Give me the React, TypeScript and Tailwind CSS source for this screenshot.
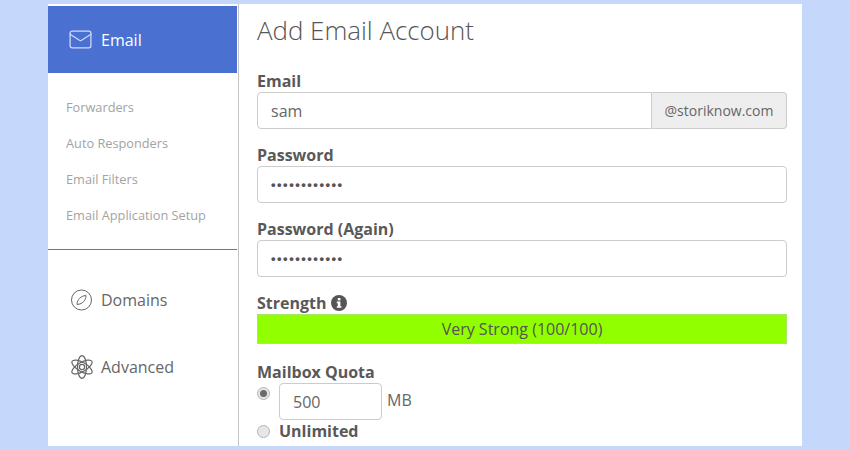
import { Mail } from 'lucide-react'

const subLinks = ['Forwarders', 'Auto Responders', 'Email Filters', 'Email Application Setup']

function Radio({ checked }: { checked?: boolean }) {
  return (
    <span className="flex h-[13px] w-[13px] shrink-0 items-center justify-center rounded-full border border-[#b5b5b5] bg-[#e6e6e6]">
      {checked && <span className="h-[7px] w-[7px] rounded-full bg-[#6b6b6b]" />}
    </span>
  )
}

function CompassIcon() {
  return (
    <svg width="22" height="22" viewBox="0 0 22 22" fill="none" stroke="currentColor" strokeWidth="1" className="shrink-0">
      <circle cx="10.5" cy="11" r="10" />
      <path d="M15 6.5C15 11 12 15 6 15.5C6.3 10.5 9.5 7 15 6.5Z" />
    </svg>
  )
}

function AtomIcon() {
  return (
    <svg width="22" height="24" viewBox="0 0 22 24" fill="none" stroke="currentColor" strokeWidth="1.2" className="shrink-0">
      <ellipse cx="11" cy="12" rx="4.5" ry="11.4" />
      <ellipse cx="11" cy="12" rx="4.5" ry="11.4" transform="rotate(60 11 12)" />
      <ellipse cx="11" cy="12" rx="4.5" ry="11.4" transform="rotate(-60 11 12)" />
      <circle cx="11" cy="12" r="2.6" />
    </svg>
  )
}

function InfoIcon() {
  return (
    <svg width="16" height="16" viewBox="0 0 16 16" className="shrink-0">
      <circle cx="8" cy="8" r="8" fill="#555" />
      <rect x="6.8" y="3" width="2.6" height="2.4" fill="white" />
      <path d="M5.8 6.6H9.4V11.2H10.4V12.8H5.8V11.2H6.8V8.2H5.8Z" fill="white" />
    </svg>
  )
}

function PasswordField({ label }: { label: string }) {
  return (
    <div className="mt-[15px]">
      <div className="h-[22px] text-base leading-[22px] font-bold text-[#595959]">{label}</div>
      <div className="flex h-[37px] items-center rounded border border-[#ccc] bg-white pl-[13px] text-[#555]">
        <span className="font-['Liberation_Sans',sans-serif] text-[13px] font-bold tracking-[1.5px]">••••••••••••</span>
      </div>
    </div>
  )
}

export default function App() {
  return (
    <div className="h-[450px] w-[850px] overflow-hidden bg-[#c5d8fb] px-12 pt-1 pb-1 font-['Open_Sans',sans-serif]">
      <div className="flex h-[442px] w-[754px] bg-white">
        <div className="flex w-[191px] shrink-0 flex-col border-r border-[#c4c4c4]">
          <div className="mt-[2px] flex h-[67px] w-[189px] items-center gap-[8px] bg-[#4a70d2] pl-[20px] text-base text-white">
            <Mail size={25} strokeWidth={1.2} className="text-[#cfdcf8]" />
            <span>Email</span>
          </div>
          <div className="flex h-[177px] w-[189px] flex-col gap-4 border-b border-[#5f7e96] pt-[24px] pl-[18px]">
            {subLinks.map(link => (
              <div key={link} className="h-5 text-[12.75px] leading-5 text-[#a3a3a3]">{link}</div>
            ))}
          </div>
          <div className="mt-[38px] flex items-center gap-[8px] pl-[23px] text-base text-[#666]">
            <CompassIcon />
            <span>Domains</span>
          </div>
          <div className="mt-[43px] flex items-center gap-[8px] pl-[23px] text-base text-[#666]">
            <AtomIcon />
            <span>Advanced</span>
          </div>
        </div>
        <div className="w-[548px] pl-[18px]">
          <h1 className="mt-[8px] h-[37px] text-[25.9px] leading-[37px] font-light text-[#555]">Add Email Account</h1>
          <div className="mt-[21px] h-[22px] text-base leading-[22px] font-bold text-[#595959]">Email</div>
          <div className="flex h-[37px]">
            <div className="flex flex-1 items-center rounded-l border border-[#ccc] pl-[13px] text-base text-[#666]">sam</div>
            <div className="flex w-[135px] items-center justify-center rounded-r border border-l-0 border-[#ccc] bg-[#eee] text-sm text-[#666]">@storiknow.com</div>
          </div>
          <PasswordField label="Password" />
          <PasswordField label="Password (Again)" />
          <div className="mt-[15px] flex h-[22px] items-center gap-[4px] text-base leading-[22px] font-bold text-[#595959]">
            <span>Strength</span>
            <InfoIcon />
          </div>
          <div className="flex h-[30px] items-center justify-center border border-[#a8e868] bg-[#91ff00] text-base text-[#555]">Very Strong (100/100)</div>
          <div className="mt-[17px] h-[22px] text-base leading-[22px] font-bold text-[#595959]">Mailbox Quota</div>
          <div className="flex items-start">
            <div className="mt-[4px]"><Radio checked /></div>
            <div className="ml-[9px] flex h-[37px] w-[103px] items-center rounded border border-[#ccc] pl-[13px] text-base text-[#666]">500</div>
            <span className="mt-[5px] ml-[5px] text-base text-[#666]">MB</span>
          </div>
          <div className="flex items-center gap-[9px]">
            <Radio />
            <span className="text-base leading-[22px] font-bold text-[#595959]">Unlimited</span>
          </div>
        </div>
      </div>
    </div>
  )
}
